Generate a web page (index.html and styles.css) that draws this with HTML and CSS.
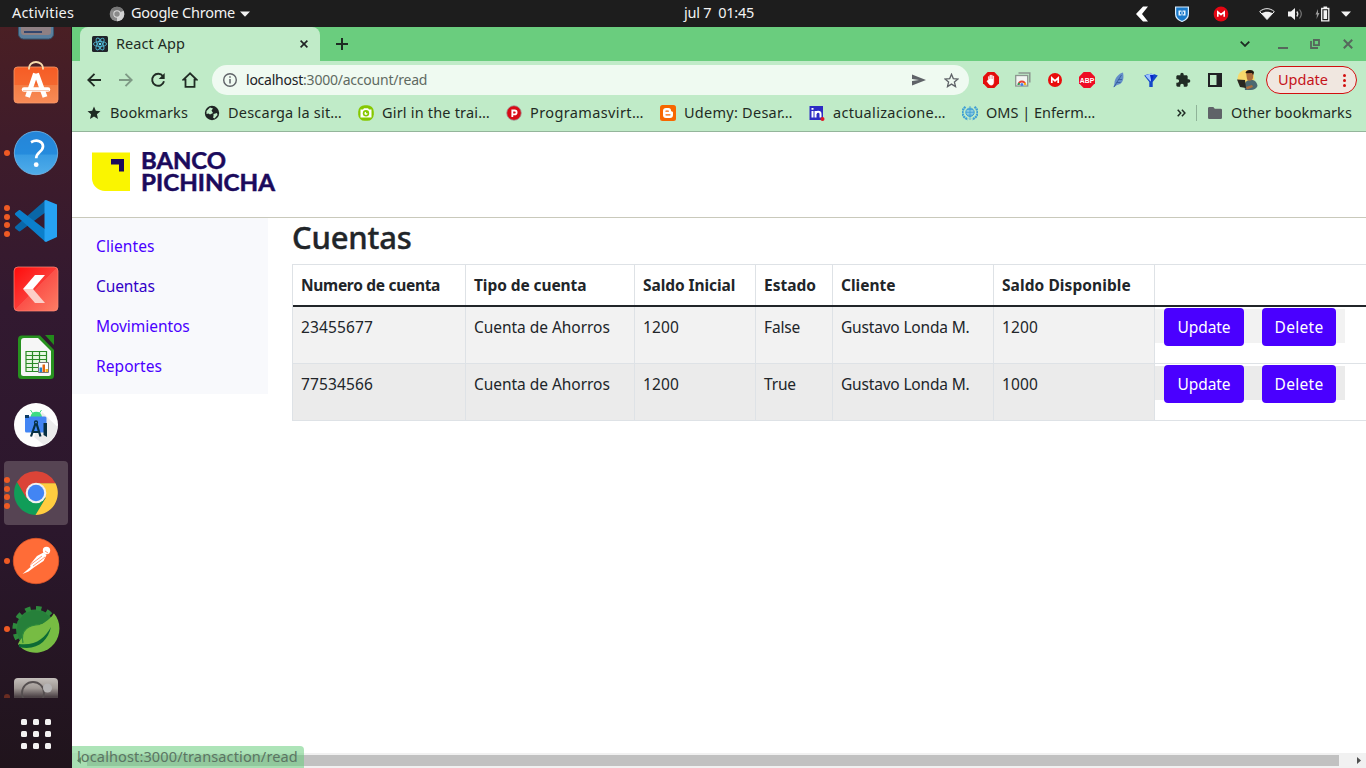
FILE: index.html
```
<!DOCTYPE html>
<html lang="es">
<head>
<meta charset="utf-8">
<title>React App</title>
<link rel="stylesheet" href="styles.css">
</head>
<body>
<header class="topbar">
  <span class="top-activities">Activities</span>
  <svg class="top-chrome" width="16" height="16" viewBox="0 0 16 16"><circle cx="8" cy="8" r="7.3" fill="#8a8a8a"/><path d="M8 8 14.5 4.7A7.3 7.3 0 0 1 8 15.3Z" fill="#d2d2d2"/><path d="M1.7 4.2A7.3 7.3 0 0 1 14.5 4.7H8Z" fill="#777"/><circle cx="8" cy="8" r="3.7" fill="#ddd"/><circle cx="8" cy="8" r="2.7" fill="#8a8a8a"/></svg>
  <span class="top-app">Google Chrome</span>
  <svg width="10" height="6" viewBox="0 0 10 6"><path d="M0 .5h10L5 5.7z" fill="#f2f2f2"/></svg>
  <span class="top-clock">jul 7&nbsp; 01:45</span>
  <div class="tray">
    <svg class="tray-k" width="12" height="16" viewBox="0 0 12 16"><path d="M7 .5h5L6 8l6 7.500H7L0 8z" fill="#fff"/></svg>
    <svg class="tray-shield" width="14" height="16" viewBox="0 0 14 16"><path d="M.6 1h12.800v7c0 4-3 6.200-6.400 7.500C3.600 14.200.6 12 .6 8z" fill="#1979ca" stroke="#d8edff" stroke-width="1.2"/><path d="M3.500 4.500h7v5h-7z" fill="#e6f4ff"/><path d="M5 5.800h1v2.400H5zM8 5.800h1v2.400H8zM6.500 4v6h1V4z" fill="#1979ca"/></svg>
    <svg class="tray-mega" width="16" height="16" viewBox="0 0 16 16"><circle cx="8" cy="8" r="7.400" fill="#e30613"/><path d="M4.800 10.800V6L8 8.700 11.200 6v4.800" fill="none" stroke="#fff" stroke-width="1.600"/></svg>
    <svg class="tray-wifi" width="16" height="12" viewBox="0 0 16 12"><path d="M.7 3.600C5-.3 11-.3 15.300 3.600L8 11.500z" fill="none" stroke="#f2f2f2"/><path d="M2.600 5.300c3.200-2.200 7.600-2.200 10.800 0L8 11.500z" fill="#f2f2f2"/></svg>
    <svg class="tray-sound" width="15" height="14" viewBox="0 0 15 14"><path d="M0 4.500h3L7 1v12L3 9.500H0z" fill="#f2f2f2"/><path d="M8.800 4.500q2 2.500 0 5" fill="none" stroke="#ddd" stroke-width="1.300"/><path d="M11.500 2.500q3.600 4.500 0 9" fill="none" stroke="#777" stroke-width="1.200"/></svg>
    <svg class="tray-battery" width="15" height="16" viewBox="0 0 15 16"><path d="M3 3 .5 8.500H2L1.500 13l3-6H3z" fill="#999"/><path d="M6.700 2.500h7.100v12.300H6.700z" fill="none" stroke="#f2f2f2" stroke-width="1.300"/><path d="M8.500 4.300h3.600V13H8.500zM8.500.5h3.600v2H8.500z" fill="#f2f2f2"/></svg>
    <svg width="10" height="6" viewBox="0 0 10 6"><path d="M0 .5h10L5 5.700z" fill="#f2f2f2"/></svg>
  </div>
</header>

<div class="desktop">
<nav class="dock">
  <div class="dock-cell dock-first">
    <svg width="48" height="48" viewBox="0 0 48 48"><rect x="6.500" y="2" width="35" height="44" rx="5" fill="#5b7f9d" stroke="#35566f"/><path d="M9 20h30v19a3 3 0 0 1-3 3H12a3 3 0 0 1-3-3z" fill="#8f8083"/><path d="M12 39h18" stroke="#33466e" stroke-width="2"/></svg>
  </div>
  <div class="dock-cell">
    <svg width="48" height="48" viewBox="0 0 48 48"><defs><linearGradient id="sw" x1="0" y1="0" x2="0" y2="1"><stop offset="0" stop-color="#f65c25"/><stop offset=".5" stop-color="#f6682f"/><stop offset=".51" stop-color="#f57d44"/><stop offset="1" stop-color="#f88b57"/></linearGradient></defs><rect x="2" y="6" width="44" height="36" rx="3.500" fill="url(#sw)" stroke="#f99a6a" stroke-width=".8"/><path d="M17 8.500V7a7 6 0 0 1 14 0v1.500" fill="none" stroke="#f7dcae" stroke-width="1.800"/><path d="M23.500 12.500 15.500 36M24.500 12.500 33 36" stroke="#fff" stroke-width="5"/><path d="M12 28.500h24" stroke="#fff" stroke-width="4.500" stroke-linecap="round"/><path d="M11 29.500h26" stroke="#f3b596" stroke-width=".7"/></svg>
  </div>
  <div class="dock-cell"><span class="dots"><i></i></span>
    <svg width="48" height="48" viewBox="0 0 48 48"><defs><linearGradient id="hp" x1="0" y1="0" x2="0" y2="1"><stop offset="0" stop-color="#2585d8"/><stop offset=".53" stop-color="#258bdd"/><stop offset=".54" stop-color="#389be3"/><stop offset="1" stop-color="#50ade9"/></linearGradient></defs><circle cx="24" cy="24" r="21.700" fill="url(#hp)" stroke="#75bdf0" stroke-width=".8"/><path d="M19 13.200c6-3.300 12-.8 12 4 0 5.800-6.800 5.800-6.800 12" fill="none" stroke="#fff" stroke-width="2.700"/><circle cx="24.200" cy="35.700" r="2.400" fill="#fff"/></svg>
  </div>
  <div class="dock-cell"><span class="dots"><i></i><i></i><i></i><i></i></span>
    <svg width="48" height="48" viewBox="0 0 48 48"><path d="M33 3.500 3.300 29.500a1.500 1.500 0 0 0 0 2L6.500 34c.7.6 1.500.5 2 0L34 15z" fill="#0a67a8"/><path d="M33 44.500 3.300 18a1.500 1.500 0 0 1 0-2L6.500 13.500c.7-.6 1.500-.5 2 0L34 33z" fill="#0b7fcb"/><path d="M34 3l11 4.500v32.500L34 45l-1.500-.7V3.600z" fill="#26a2f2"/></svg>
  </div>
  <div class="dock-cell">
    <svg width="48" height="48" viewBox="0 0 48 48"><defs><linearGradient id="kk" x1="0" y1="0" x2="1" y2="1"><stop offset="0" stop-color="#ff0b0b"/><stop offset=".49" stop-color="#fb3a36"/><stop offset=".5" stop-color="#fb5149"/><stop offset="1" stop-color="#fd7e65"/></linearGradient></defs><rect x="2" y="2" width="44" height="44" rx="4" fill="url(#kk)" stroke="#ff8a78" stroke-width=".7"/><path d="M23 10h10L21 24H11z" fill="#fff"/><path d="M11 24h10l12 14H23z" fill="#fccfc8"/></svg>
  </div>
  <div class="dock-cell">
    <svg width="48" height="48" viewBox="0 0 48 48"><path d="M10 2.500h18L42 17v25.500a3.500 3.500 0 0 1-3.500 3.500H9.500A3.500 3.500 0 0 1 6 42.500v-36a4 4 0 0 1 4-4z" fill="#27911f"/><path d="M33 2h9v10z" fill="#238a1b"/><path d="M9 8a3 3 0 0 1 3-3h14l13 13v22.500a2.500 2.500 0 0 1-2.500 2.500h-25A2.500 2.500 0 0 1 9 40.500z" fill="#f6f6f6"/><path d="M13.500 18h21v20h-21z" fill="#e8f8e3"/><path d="M13.500 18.500h21.500M13.500 22.500h21.500M13.500 26.500h21.500M13.500 30.500h21.500M13.500 34.500h21.500M13.500 38.500h21.500M14 18v20.500M20.500 18v20.500M27.500 18v20.500M34.500 18v20.500" stroke="#2b8a27" stroke-width="1.200"/><path d="M26.500 29.500h10v10h-10z" fill="#fff" stroke="#777"/><path d="M27.500 34.500h2.500v4.500h-2.500z" fill="#1c83d5"/><path d="M30.500 31.500h2.500V39h-2.500z" fill="#e1650f"/><path d="M33.500 36h2.500v3h-2.500z" fill="#f2b51d"/></svg>
  </div>
  <div class="dock-cell">
    <svg width="48" height="48" viewBox="0 0 48 48"><circle cx="24" cy="24" r="22" fill="#fdfdfd"/><path d="m30 11 15.500 15A22 22 0 0 1 32 44L22 36z" fill="#ececec"/><path d="M18.500 16a5.800 6 0 0 1 11.500 0z" fill="#3ddc84"/><path d="m18.500 9 2 3M29.500 9l-2 3" stroke="#3ddc84"/><rect x="13" y="15.500" width="21.500" height="16" rx="1.500" fill="#4285f4"/><path d="M13 14h4v3h-4z" fill="#0b3a64"/><path d="m23.500 22.500-4.500 13M24.500 22.500l4 13M19.500 31h8" stroke="#073042" stroke-width="2.200"/><circle cx="24" cy="21.500" r="1.500" fill="#4285f4" stroke="#073042" stroke-width="1.300"/><path d="M31.500 22h3.500v14l-3.500-2z" fill="#073042"/></svg>
  </div>
  <div class="dock-cell dock-active"><span class="dots"><i></i><i></i><i></i><i></i></span>
    <svg width="48" height="48" viewBox="0 0 48 48"><path d="M5 13A22 22 0 0 0 24 46l9.500-17z" fill="#109d58"/><path d="M5 13a22 22 0 0 1 38.500 1.200H24l-9.500 15z" fill="#db4437"/><path d="M43.500 14.200A22 22 0 0 1 23.500 46l10.200-17L24 14.200z" fill="#ffcd40"/><circle cx="24" cy="24" r="10.300" fill="#f1f1f1"/><circle cx="24" cy="24" r="8.200" fill="#4285f4"/></svg>
  </div>
  <div class="dock-cell"><span class="dots"><i></i></span>
    <svg width="48" height="48" viewBox="0 0 48 48"><circle cx="24" cy="24" r="22.700" fill="#ff6c37" stroke="#dd5528" stroke-width=".8"/><circle cx="34.500" cy="13.500" r="3.700" fill="#fff"/><path d="m31.500 15.500-6.500 3.500-7 8.500.5 2.500L10.500 37l6-2.500L22.500 30l9-6 3-6z" fill="#fff"/><path d="m18 28 12-9M21 29l12-9M33 14l3 2" stroke="#ff6c37" stroke-width=".7"/></svg>
  </div>
  <div class="dock-cell"><span class="dots"><i></i></span>
    <svg width="48" height="48" viewBox="0 0 48 48"><circle cx="23.500" cy="24" r="19.500" fill="#26803a"/><circle cx="23.500" cy="24" r="20.800" fill="none" stroke="#2e8a3d" stroke-width="4.600" stroke-dasharray="5.440 5.440"/><path d="M42 8.500C53 21 47 44 27 47.500 17 48.500 10 45 6 39 13 24 33 22 42 8.500z" fill="#77bc43"/><path d="M11 38C8 24 17 20 28 19.500 35 19 39 14 42 8.500 44 18 40 24 37.500 27 32 38 20 41 11 38z" fill="#77bc43"/><path d="M11 38C8 24 17 20 28 19.500" fill="none" stroke="#2c8a3c" stroke-width="1.200"/><path d="M7 39c17 2 26-6 32-17-3 14-14 24-32 20z" fill="#0d6b35"/></svg>
  </div>
  <div class="dock-cell dock-last"><span class="dots"><i></i></span>
    <svg width="48" height="48" viewBox="0 0 48 48"><defs><linearGradient id="cm" x1="0" y1="0" x2="0" y2="1"><stop offset="0" stop-color="#c4bfbb"/><stop offset=".3" stop-color="#a09995"/><stop offset=".55" stop-color="#4d4347"/></linearGradient></defs><rect x="2" y="7" width="44" height="34" rx="4" fill="url(#cm)"/><circle cx="21" cy="22" r="11" fill="none" stroke="#554f50" stroke-width="1.800"/><circle cx="35.500" cy="17" r="4.500" fill="#b6b4b5"/></svg>
  </div>
  <div class="dock-grid"><i></i><i></i><i></i><i></i><i></i><i></i><i></i><i></i><i></i></div>
</nav>

<main class="browser">
  <div class="tabstrip">
    <div class="tab">
      <svg width="16" height="16" viewBox="0 0 16 16"><rect width="16" height="16" rx="1.500" fill="#20232a"/><g fill="none" stroke="#4fb3d0" stroke-width=".9"><ellipse cx="8" cy="8" rx="6.600" ry="2.500"/><ellipse cx="8" cy="8" rx="6.600" ry="2.500" transform="rotate(60 8 8)"/><ellipse cx="8" cy="8" rx="6.600" ry="2.500" transform="rotate(120 8 8)"/></g><circle cx="8" cy="8" r="1.300" fill="#61dafb"/></svg>
      <span class="tab-title">React App</span>
      <svg width="8" height="8" viewBox="0 0 8 8"><path d="m.6.6 6.800 6.800M7.400.6.6 7.400" stroke="#202124" stroke-width="1.600"/></svg>
    </div>
    <svg class="new-tab" width="12" height="12" viewBox="0 0 12 12"><path d="M6 0v12M0 6h12" stroke="#1d2b22" stroke-width="2"/></svg>
    <svg class="win-search" width="10" height="6" viewBox="0 0 10 6"><path d="m.7.7 4.300 4.200L9.300.7" fill="none" stroke="#1d2b22" stroke-width="1.800"/></svg>
    <svg class="win-min" width="10" height="12" viewBox="0 0 10 12"><path d="M0 10h10" stroke="#56675c" stroke-width="2"/></svg>
    <svg class="win-max" width="10" height="10" viewBox="0 0 10 10"><path d="M1 2v7h7M3.900 1h5.100v5.100H3.900z" fill="none" stroke="#56675c" stroke-width="1.800"/></svg>
    <svg class="win-close" width="10" height="10" viewBox="0 0 10 10"><path d="m.8.8 8.400 8.400M9.200.8.800 9.200" stroke="#56675c" stroke-width="2"/></svg>
  </div>

  <div class="toolbar">
    <span class="tool"><svg width="14" height="14" viewBox="0 0 14 14"><path d="M14 7H1.500M7.500.8 1.300 7l6.200 6.200" fill="none" stroke="#202b24" stroke-width="1.900"/></svg></span>
    <span class="tool"><svg width="14" height="14" viewBox="0 0 14 14"><path d="M0 7h12.500M6.500.8 12.700 7l-6.200 6.200" fill="none" stroke="#7e9a85" stroke-width="1.900"/></svg></span>
    <span class="tool"><svg width="16" height="16" viewBox="0 0 16 16"><path d="M13 4.200A6 6 0 1 0 14 9.300" fill="none" stroke="#202b24" stroke-width="1.900"/><path d="M14.700 1v6H8.700z" fill="#202b24"/></svg></span>
    <span class="tool"><svg width="16" height="16" viewBox="0 0 16 16"><path d="M8 1.300 1.500 7.600h2v7.200h9V7.600h2z" fill="none" stroke="#202b24" stroke-width="1.800"/></svg></span>
    <div class="omnibox">
      <svg width="14" height="14" viewBox="0 0 14 14"><circle cx="7" cy="7" r="6.300" fill="none" stroke="#5f6368" stroke-width="1.400"/><path d="M7 6v4.500M7 3.300v1.500" stroke="#5f6368" stroke-width="1.500"/></svg>
      <span class="url"><b>localhost</b>:3000/account/read</span>
      <svg width="14" height="12" viewBox="0 0 14 12"><path d="M0 .5 14 6 0 11.500V7l7-1-7-1z" fill="#5f6368"/></svg>
      <svg width="15" height="15" viewBox="0 0 15 15"><path d="m7.500 1.300 1.800 4.300 4.700.4-3.600 3 1.100 4.600-4-2.500-4 2.500L4.600 9 1 6l4.700-.4z" fill="none" stroke="#5f6368" stroke-width="1.300"/></svg>
    </div>
    <span class="tool"><svg width="16" height="16" viewBox="0 0 16 16"><path d="M4.700 0h6.600L16 4.700v6.600L11.300 16H4.700L0 11.300V4.700z" fill="#e40d0d"/><path d="M5.300 8V4.500h1V7h.5V3h1v4h.5V3h1v4h.5V4h1v6c0 2-1 3.300-2.600 3.300C6.500 13.300 5 11 3.800 9z" fill="#fff" stroke="#fff" stroke-width=".3"/></svg></span>
    <span class="tool"><svg width="16" height="16" viewBox="0 0 16 16"><path d="M3.500 1h11.300v9.500" fill="none" stroke="#8c9690" stroke-width="1.500"/><rect x=".7" y="3.500" width="12" height="10.500" fill="#f2f5f3" stroke="#8c9690" stroke-width="1.300"/><path d="M3.500 12.800a3.400 3.400 0 0 1 6.800 0" fill="none" stroke="#e64235" stroke-width="2"/><path d="M3.500 13a4 4 0 0 1 .7-2" stroke="#22a55b" stroke-width="2"/><path d="M10.300 13a4 4 0 0 0-.7-2" stroke="#f7bd15" stroke-width="2"/><circle cx="6.900" cy="12.400" r="1.500" fill="#477fe4"/></svg></span>
    <span class="tool"><svg width="16" height="16" viewBox="0 0 16 16"><circle cx="8" cy="8" r="7" fill="#e90c0c"/><path d="M4.800 11V6l3.200 2.900L11.200 6v5" fill="none" stroke="#fff" stroke-width="1.700"/></svg></span>
    <span class="tool"><svg width="16" height="16" viewBox="0 0 16 16"><path d="M4.700 0h6.600L16 4.700v6.600L11.300 16H4.700L0 11.300V4.700z" fill="#ee0b24"/><text class="abp" x=".8" y="10.900" textLength="14.400" lengthAdjust="spacingAndGlyphs">ABP</text></svg></span>
    <span class="tool"><svg width="16" height="16" viewBox="0 0 16 16"><path d="M12 .5C8 1.500 3.500 6 3.500 11l-1 4.500 3.500-2.500c5.500-.5 7.500-6 6-12.500z" fill="#638ec9"/><path d="M3 15 10.500 3M5.500 10.500h4M7 7.500h4" stroke="#365d9e" stroke-width=".9"/></svg></span>
    <span class="tool"><svg width="16" height="16" viewBox="0 0 16 16"><path d="M1.200 3.500Q8 0 14.800 3.500L9.700 10v5H6.300v-5z" fill="#1448c8"/><path d="M2.200 3.500Q8 .5 11 2.500L7.500 9.500z" fill="#9cc3ff"/><path d="M7 3h4L8.500 10z" fill="#0a27c8"/></svg></span>
    <span class="tool"><svg width="16" height="16" viewBox="0 0 24 24"><path d="M20.500 11H19V7c0-1.100-.9-2-2-2h-4V3.500a2.500 2.500 0 0 0-5 0V5H4c-1.100 0-2 .9-2 2v3.800h1.500a2.700 2.700 0 0 1 0 5.400H2V20c0 1.100.9 2 2 2h3.800v-1.500a2.700 2.700 0 0 1 5.400 0V22H17c1.100 0 2-.9 2-2v-4h1.500a2.500 2.500 0 0 0 0-5z" fill="#202b24"/></svg></span>
    <span class="tool"><svg width="14" height="14" viewBox="0 0 14 14"><path d="M0 0h14v14H0zM2 2v10h6.500V2z" fill="#202124" fill-rule="evenodd"/></svg></span>
    <span class="tool"><svg width="22" height="22" viewBox="0 0 22 22"><circle cx="10" cy="9.500" r="8.500" fill="#f8d96b"/><path d="M9 21c-1-6 0-9 4-10 5-1 8 2 8.500 6-1 2.500-4 4-6.500 4z" fill="#4d6871"/><path d="M10 3c2-3 7-2.500 7.500.5L17 9c-1 3.500-5 3.500-6 1z" fill="#ad6e3c"/><path d="M9.500 4C10 .5 17 0 18 3.500L17 6l-1-2-5 .3z" fill="#21180f"/><path d="M1 10.500 9 11l1 8-6-1z" fill="#292721"/><path d="m10 18 6-2 1 2-6 2.500z" fill="#ad6e3c"/></svg></span>
    <div class="update"><span>Update</span><i class="kebab"><b></b><b></b><b></b></i></div>
  </div>

  <div class="bookmarks">
    <span class="bm bm1"><svg width="16" height="16" viewBox="0 0 16 16"><path d="m8 1.500 1.800 4.300 4.700.4-3.600 3 1.100 4.800-4-2.600L4 14l1.100-4.800-3.600-3 4.700-.4z" fill="#1f2b24"/></svg><span>Bookmarks</span></span>
    <span class="bm bm2"><svg width="16" height="16" viewBox="0 0 16 16"><circle cx="8" cy="8" r="7.200" fill="#1f2424"/><path d="M2.500 6 6 2.500l3 1-1.500 2L9 8 6 9.500 4.500 8.500 2.500 9zM9.500 9 13 8l.5 2-3 3.500-1.500-1L9.500 11z" fill="#c0ebc8"/></svg><span>Descarga la sit…</span></span>
    <span class="bm bm3"><svg width="16" height="16" viewBox="0 0 16 16"><rect x=".2" y=".2" width="15.600" height="15.600" rx="6.500" fill="#86c800"/><path d="M2.500 4.500H5l1-1.300h4l1 1.300h2.500v8h-11z" fill="#fff"/><circle cx="8" cy="8.300" r="3.200" fill="#86c800"/><path d="M8 6.700a1.600 1.600 0 1 0 1.600 1.600H8z" fill="#fff"/></svg><span>Girl in the trai…</span></span>
    <span class="bm bm4"><svg width="16" height="16" viewBox="0 0 16 16"><circle cx="8" cy="8" r="7.300" fill="#d80a15" stroke="#9e9d9c" stroke-width=".8"/><path d="M6.300 12V5.500h2.400a1.900 1.900 0 0 1 0 3.800H6.500" fill="none" stroke="#fff" stroke-width="1.800"/></svg><span>Programasvirt…</span></span>
    <span class="bm bm5"><svg width="16" height="16" viewBox="0 0 16 16"><rect width="16" height="16" rx="2.500" fill="#f76700"/><path d="M6 3h2.500A2.500 2.500 0 0 1 11 5.500c0 1.500 2 .5 2 2V10a3 3 0 0 1-3 3H6a3 3 0 0 1-3-3V6a3 3 0 0 1 3-3z" fill="#fff"/><path d="M6 6.200h2.300M6 9.800h4" stroke="#f76700" stroke-width="1.300" stroke-linecap="round"/></svg><span>Udemy: Desar…</span></span>
    <span class="bm bm6"><svg width="16" height="16" viewBox="0 0 16 16"><path d="M.5 1H14v14H.5z" fill="#2d2bc4"/><path d="M3.500 6v6.500M3.500 3v1.700M6.500 12.500V6M6.800 9c0-3 4.700-3 4.700 0v3.500" fill="none" stroke="#fff" stroke-width="2"/><circle cx="13.500" cy="14" r="2" fill="#e01524"/></svg><span>actualizacione…</span></span>
    <span class="bm bm7"><svg width="16" height="16" viewBox="0 0 16 16"><g fill="none" stroke="#3e9fd4"><circle cx="8" cy="7.300" r="4.200" fill="#8ccbe0"/><path d="M8 1v14M3.800 7.300h8.400M5 4.500h6M5 10.200h6" stroke-width=".8"/><path d="M3.500 1.800C-.8 5-.8 12 6 14.300M12.500 1.800c4.300 3.200 4.300 10.200-2.500 12.500" stroke-width="2.300" stroke-dasharray="2 .6"/></g></svg><span>OMS | Enferm…</span></span>
    <svg class="more" width="9" height="8" viewBox="0 0 9 8"><path d="m.7.800 3 3.200-3 3.200M4.900.8l3 3.200-3 3.200" fill="none" stroke="#1f2b24" stroke-width="1.500"/></svg>
    <span class="bm-sep"></span>
    <span class="bm bm8"><svg width="14" height="12" viewBox="0 0 14 12"><path d="M1.300 0h4l1.500 1.700h6A1.200 1.200 0 0 1 14 2.900v7.900a1.200 1.200 0 0 1-1.200 1.200H1.200A1.200 1.200 0 0 1 0 10.800V1.300C0 .6.600 0 1.300 0z" fill="#5f6368"/></svg><span>Other bookmarks</span></span>
  </div>

  <section class="page">
    <div class="page-head">
      <svg width="186" height="42" viewBox="0 0 186 42"><path d="M0 .5h38V39H13A13 13 0 0 1 0 27z" fill="#faf500"/><path d="M19 7h13v12.500h-5v-7h-8z" fill="#1b0a5c"/><g class="brand"><text x="49" y="17" textLength="85" lengthAdjust="spacingAndGlyphs">BANCO</text><text x="49" y="39.300" textLength="134" lengthAdjust="spacingAndGlyphs">PICHINCHA</text></g></svg>
    </div>
    <div class="page-body">
      <nav class="side">
        <a class="link-a">Clientes</a>
        <a class="link-b">Cuentas</a>
        <a class="link-c">Movimientos</a>
        <a class="link-a">Reportes</a>
      </nav>
      <div class="content">
        <h1>Cuentas</h1>
        <table>
          <colgroup><col class="c1"><col class="c2"><col class="c3"><col class="c4"><col class="c5"><col class="c6"><col class="c7"></colgroup>
          <thead><tr><th class="th-num">Numero de cuenta</th><th class="th-tipo">Tipo de cuenta</th><th class="th-tipo">Saldo Inicial</th><th>Estado</th><th>Cliente</th><th class="th-disp">Saldo Disponible</th><th></th></tr></thead>
          <tbody>
            <tr><td class="num">23455677</td><td class="txt">Cuenta de Ahorros</td><td class="num">1200</td><td class="short">False</td><td class="long">Gustavo Londa M.</td><td class="num">1200</td><td class="actions"><div class="btns"><button class="btn-u">Update</button><button class="btn-d">Delete</button></div></td></tr>
            <tr><td class="num">77534566</td><td class="txt">Cuenta de Ahorros</td><td class="num">1200</td><td class="short">True</td><td class="long">Gustavo Londa M.</td><td class="num">1000</td><td class="actions"><div class="btns"><button class="btn-u">Update</button><button class="btn-d">Delete</button></div></td></tr>
          </tbody>
        </table>
      </div>
    </div>
    <div class="scrollbar">
      <svg width="15" height="15" viewBox="0 0 15 15"><path d="M9 4v7L5 7.500z" fill="#505050"/></svg>
      <span class="thumb"></span>
      <svg width="15" height="15" viewBox="0 0 15 15"><path d="M6 4v7l4-3.500z" fill="#505050"/></svg>
    </div>
    <div class="status">localhost:3000/transaction/read</div>
  </section>
</main>
</div>
</body>
</html>
```
FILE: styles.css
```
* { box-sizing: border-box; }
body { margin: 0; width: 1366px; height: 768px; overflow: hidden; display: flex; flex-direction: column; background: #fff; font-family: "Noto Sans", "Open Sans", sans-serif; }
svg { display: block; flex: none; }
i { font-style: normal; }

/* system bar */
.topbar { height: 27px; flex: none; background: #1d1d1d; color: #f2f2f2; display: flex; align-items: center; font-size: 14.5px; line-height: 25px; white-space: pre; }
.topbar > span { height: 27px; }
.top-activities { width: 97px; padding-left: 12px; letter-spacing: .16px; }
.top-chrome { margin-left: 12px; }
.top-app { width: 115px; padding-left: 6px; letter-spacing: -.23px; }
.top-clock { margin-left: 434px; width: 80px; letter-spacing: -.26px; }
.tray { flex: 1; display: flex; align-items: center; justify-content: flex-end; padding-right: 15px; }
.tray-k { margin-right: 27px; }
.tray-shield { margin-right: 24px; }
.tray-mega { margin-right: 30px; }
.tray-wifi { margin-right: 13px; }
.tray-sound { margin-right: 12px; }
.tray-battery { margin-right: 11px; }

.desktop { flex: 1; display: flex; min-height: 0; }

/* dock */
.dock { width: 72px; flex: none; display: flex; flex-direction: column; background: linear-gradient(#4a1f24, #3f1c2a 15%, #321930 38%, #2b172c 68%, #20141c); border-right: 1px solid #241020; }
.dock-cell { position: relative; height: 68px; flex: none; display: flex; align-items: center; justify-content: center; }
.dock-first { height: 24px; overflow: hidden; align-items: flex-end; }
.dock-first svg { margin-bottom: 10px; }
.dock-active { height: 64px; margin: 2px 3px 2px 4px; border-radius: 4px; background: #564453; }
.dock-last { height: 35px; overflow: hidden; align-items: flex-start; }
.dock-last svg { margin-top: 8px; }
.dots { position: absolute; left: 4px; top: 0; bottom: 0; display: flex; flex-direction: column; justify-content: center; gap: 2.700px; }
.dock-active .dots { left: 0; }
.dots i { width: 6px; height: 6px; border-radius: 3px; background: #ee5a24; }
.dock-last .dots { top: 31px; bottom: auto; opacity: .35; }
.dock-grid { display: grid; grid-template-columns: repeat(3, 6px); gap: 6px; margin: 21px 0 0 21px; }
.dock-grid i { height: 6px; border-radius: 1.500px; background: #f4f2f2; }

/* browser chrome */
.browser { flex: 1; min-width: 0; display: flex; flex-direction: column; }
.tabstrip { height: 34px; flex: none; background: #6acd7e; display: flex; align-items: center; padding-left: 8px; }
.tab { width: 240px; height: 34px; border-radius: 8px 8px 0 0; background: #c0ebc8; display: flex; align-items: center; padding: 0 12px; }
.tab-title { flex: 1; margin-left: 8px; padding-bottom: 2px; font-size: 14.5px; letter-spacing: .07px; color: #1f2b24; }
.new-tab { margin-left: 16px; }
.win-search { margin-left: auto; margin-right: 28px; }
.win-min { margin-right: 22px; }
.win-max { margin-right: 23px; }
.win-close { margin-right: 13px; }
.toolbar { height: 38px; flex: none; background: #c0ebc8; display: flex; align-items: center; padding-left: 6px; }
.tool { width: 32px; flex: none; display: flex; justify-content: center; }
.abp { font: 700 7.500px "Liberation Sans", sans-serif; fill: #fff; }
.omnibox { width: 757px; height: 30px; margin: 0 6px; border-radius: 15px; background: #effaf1; display: flex; align-items: center; padding: 0 10px 0 11px; }
.url { flex: 1; margin-left: 9px; padding-bottom: 2px; font-size: 14px; letter-spacing: -.230px; color: #5f6a62; }
.url b { font-weight: 400; color: #202124; }
.omnibox svg:last-child { margin-left: 18px; }
.update { width: 91px; height: 28px; margin-left: 3px; border: 1px solid #d20f0f; border-radius: 14px; background: #f0e7e0; color: #c5131a; display: flex; align-items: center; padding-left: 11px; font-size: 14.500px; }
.update span { padding-bottom: 2px; }
.kebab { display: flex; flex-direction: column; gap: 2px; margin-left: 15px; }
.kebab b { width: 3px; height: 3px; border-radius: 50%; background: #d20f0f; }
.bookmarks { height: 33px; flex: none; background: #c0ebc8; border-bottom: 1px solid #94b59b; display: flex; align-items: center; padding: 0 0 5px 14px; color: #1f2b24; font-size: 14.500px; white-space: nowrap; }
.bm { display: flex; align-items: center; gap: 8px; flex: none; }
.bm span { padding-bottom: 2px; }
.bm1 { width: 118px; letter-spacing: .1px; }
.bm2 { width: 154px; letter-spacing: .22px; }
.bm3 { width: 148px; letter-spacing: .19px; }
.bm4 { width: 154px; letter-spacing: .38px; }
.bm5 { width: 149px; letter-spacing: .26px; }
.bm6 { width: 153px; letter-spacing: .33px; }
.bm7 { width: 215px; letter-spacing: 0; }
.bm8 { gap: 9px; letter-spacing: .06px; }
.bm-sep { width: 1px; height: 16px; margin: 0 11px 0 10px; background: #8fb398; }

/* page */
.page { flex: 1; min-height: 0; position: relative; display: flex; flex-direction: column; background: #fff; overflow: hidden; }
.page-head { height: 86px; flex: none; padding: 20px 0 0 20px; border-bottom: 1px solid #c9c9bb; }
.brand { font: 700 22.500px Lato, sans-serif; fill: #1b0a5c; stroke: #1b0a5c; stroke-width: .5px; }
.page-body { flex: 1; min-height: 0; display: flex; align-items: flex-start; }
.side { width: 196px; height: 176px; flex: none; padding: 8px 0; background: #f8f9fc; display: flex; flex-direction: column; }
.side a { height: 40px; padding-left: 24px; line-height: 40px; font-size: 15.500px; letter-spacing: .08px; color: #4a00ff; }
.side .link-b { color: #3200c8; letter-spacing: -.1px; }
.side .link-c { letter-spacing: -.05px; }
.content { flex: 1; min-width: 0; padding-left: 24px; overflow: hidden; }
h1 { margin: 0; height: 46px; line-height: 39px; font-size: 31px; font-weight: 500; letter-spacing: -.2px; color: #212529; -webkit-text-stroke: .4px #212529; }
table { width: 1183px; table-layout: fixed; border-collapse: separate; border-spacing: 0; border-top: 1px solid #dee2e6; border-left: 1px solid #dee2e6; color: #212529; font-size: 15.500px; line-height: 24px; }
.c1 { width: 173px; } .c2 { width: 169px; } .c3 { width: 121px; } .c4 { width: 77px; } .c5 { width: 161px; } .c6 { width: 161px; } .c7 { width: 320px; }
th, td { text-align: left; vertical-align: top; padding: 8px; white-space: nowrap; }
th { height: 42px; padding-bottom: 10px; font-weight: 700; background: linear-gradient(#212529, #212529) left bottom / 100% 2px no-repeat, linear-gradient(#dee2e6, #dee2e6) right top / 1px 100% no-repeat; }
.th-num { letter-spacing: -.3px; }
.th-tipo { letter-spacing: -.08px; }
.th-disp { letter-spacing: .08px; }
td { height: 57px; border-right: 1px solid #dee2e6; border-bottom: 1px solid #dee2e6; background: #f2f2f2; }
tr:nth-child(2) td { background: #ebebeb; }
.num { letter-spacing: .13px; }
.txt { letter-spacing: -.04px; }
.short { letter-spacing: -.16px; }
.long { letter-spacing: -.18px; }
tbody tr td.actions { padding: 2px 0 0; background: #fff; }
.btns { width: 190px; height: 34px; background: #f2f2f2; display: flex; align-items: flex-start; gap: 18px; padding-left: 9px; }
tr:nth-child(2) .btns { background: #ebebeb; }
button { height: 38px; margin: -1px 0 0; padding: 0; border: 0; border-radius: 4px; background: #4a00ff; color: #fff; font: 400 15.500px "Noto Sans", sans-serif; }
.btn-u { width: 80px; letter-spacing: -.07px; }
.btn-d { width: 74px; letter-spacing: .31px; }
.scrollbar { height: 15px; flex: none; background: #f1f1f1; display: flex; align-items: center; }
.thumb { flex: 1; height: 11px; margin-right: 12px; background: #c1c1c1; }
.status { position: absolute; left: 0; bottom: 0; width: 232px; height: 22px; padding-left: 5px; border-radius: 0 4px 0 0; background: rgba(106, 205, 126, .55); color: #5b7563; font-size: 14.500px; line-height: 21px; letter-spacing: .13px; }
```
